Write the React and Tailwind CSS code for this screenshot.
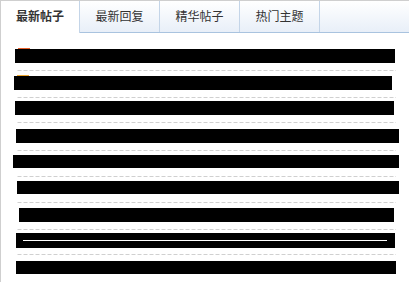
import React from 'react';

const tabs = ['最新帖子', '最新回复', '精华帖子', '热门主题'];

// redacted rows: left offset from list edge (x=17), width, top offset, height
const rows = [
    { ml: 'ml-[-2px]', w: 'w-[380px]', mt: 'mt-[4px]', h: 'h-[14px]', mark: 'bg-[#e8602a]' },
    { ml: 'ml-[-3px]', w: 'w-[378px]', mt: 'mt-[4px]', h: 'h-[14px]', mark: 'bg-[#f0a830]' },
    { ml: 'ml-[-2px]', w: 'w-[379px]', mt: 'mt-[2px]', h: 'h-[14px]' },
    { ml: 'ml-[-1px]', w: 'w-[383px]', mt: 'mt-[5px]', h: 'h-[14px]' },
    { ml: 'ml-[-4px]', w: 'w-[386px]', mt: 'mt-[3px]', h: 'h-[13px]' },
    { ml: 'ml-[0px]', w: 'w-[382px]', mt: 'mt-[3px]', h: 'h-[13px]' },
    { ml: 'ml-[2px]', w: 'w-[375px]', mt: 'mt-[4px]', h: 'h-[14px]' },
    { ml: 'ml-[-1px]', w: 'w-[379px]', mt: 'mt-[2px]', h: 'h-[15px]', line: true },
    { ml: 'ml-[-1px]', w: 'w-[380px]', mt: 'mt-[5px]', h: 'h-[13px]' },
    { ml: 'ml-[1px]', w: 'w-[375px]', mt: 'mt-[5px]', h: 'h-[14px]' },
];

export default function App() {
    return (
        <div className="w-[409px] h-[282px] overflow-hidden bg-white border-l border-t border-[#cfcfcf] font-['Liberation_Sans','Noto_Sans_CJK_SC',sans-serif]">
            <div className="flex h-[32px] border-b border-[#a9c3df] bg-[linear-gradient(#ffffff,#e8eff8)]">
                {tabs.map((t, i) => (
                    <div
                        key={t}
                        className={
                            i === 0
                                ? 'w-[79px] h-[32px] -mb-px bg-white border-r border-[#c4d5e8] flex items-center justify-center text-[12px] font-bold text-[#333]'
                                : 'w-[80px] h-full border-r border-[#c4d5e8] flex items-center justify-center text-[12px] text-[#333]'
                        }
                    >
                        {t}
                    </div>
                ))}
            </div>
            <div className="pt-[11px] pl-[16px]">
                {rows.map((r, i) => (
                    <div
                        key={i}
                        className="w-[379px] h-[23px] bg-[linear-gradient(to_right,#d0d0d0_4px,transparent_4px)] bg-[length:6px_1px] bg-repeat-x bg-bottom"
                    >
                        <div className={`${r.ml} ${r.w} ${r.mt}`}>
                            {r.mark ? (
                                <div className={`ml-[3px] w-[12px] h-px ${r.mark}`}></div>
                            ) : (
                                <div className="h-px"></div>
                            )}
                            <div className={`${r.h} bg-black flex flex-col justify-center`}>
                                {r.line && <div className="ml-[7px] w-[364px] h-px bg-white"></div>}
                            </div>
                        </div>
                    </div>
                ))}
            </div>
        </div>
    );
}
